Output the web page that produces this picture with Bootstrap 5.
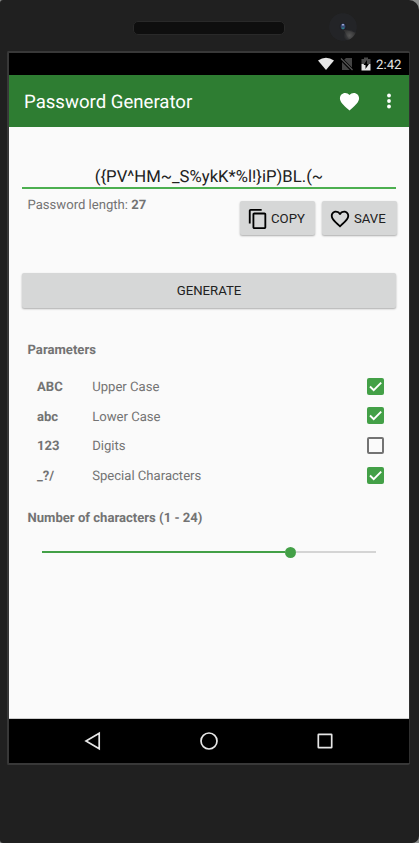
<!DOCTYPE html>
<html lang="en">
<head>
<meta charset="utf-8">
<meta name="viewport" content="width=device-width, initial-scale=1">
<title>Password Generator</title>
<link href="https://cdn.jsdelivr.net/npm/bootstrap@5.3.0/dist/css/bootstrap.min.css" rel="stylesheet">
<style>
body{font-family:Roboto,sans-serif;background:#8b8d8c;color:#737373;font-size:13.1px;line-height:20px;text-rendering:geometricPrecision}
svg{display:block;flex:none}
.phone{width:419px;height:843px;background:#202020;border-radius:3px 10px 7px 3px}
.phone-top{height:51px;padding-left:133px;padding-top:13px}
.speaker{width:152px;height:14px;margin-top:8px;border-radius:5px;background:#0e0e0e;border:1px solid #292929}
.camera{width:28px;height:28px;margin-left:44px}
.screen{width:403px;height:714px;margin-left:7px;border:2px solid #383838;border-right:1px solid #303030;border-radius:2px;background:#fafafa}
.status{height:22px;background:#000;color:#e6e6e6;padding-right:7.5px;font-size:13.2px}
.status span{padding-top:3px}
.appbar{height:52px;background:#2e7d32;color:#fff;padding:0 14px 0 15px}
.title{font-size:18.6px;padding-top:2px}
.main{height:591px;padding:35px 13px 0 13px}
.pw{height:27px;border-bottom:2px solid #4caf50;color:#212121;font-size:16.7px;line-height:31px}
.meta{padding-top:6px;padding-left:5.5px}
.meta-label{padding-top:1px}
.key{color:#212121;background:#d6d7d7;border:0;border-radius:2px;box-shadow:0 1px 2px rgba(0,0,0,.32);font-size:13.2px;line-height:20px;height:34px;padding:1px 0 0}
.key:hover{background:#d6d7d7}
.small-key{width:75px}
.gen{margin-top:38px;height:34.5px}
.params{margin:33px 12px 0 5.5px}
.param{height:29.6px}
.param b,.param span:not(.box){padding-top:3.4px}
.sym{width:55.2px;margin-left:9.5px}
.box{width:17px;height:17px;border-radius:2px;background:#43a047}
.box.off{background:#fafafa;border:2px solid #737373}
.track{height:12px;margin:17.5px 20px 0 20px}
.line-on{width:242.5px;height:2px;background:#43a047}
.line-off{height:2px;background:#d4d4d4}
.thumb{width:11px;height:11px;border-radius:50%;background:#43a047}
.navkeys{height:45px;background:#000;border-top:1px solid #ccc;padding:0 75px 0 75px}
</style>
</head>
<body>
<div class="phone overflow-hidden">
  <div class="phone-top d-flex align-items-start">
    <div class="speaker"></div>
    <svg class="camera" viewBox="0 0 28 28"><defs><radialGradient id="glare"><stop offset="0" stop-color="#777"/><stop offset="1" stop-color="#777" stop-opacity="0"/></radialGradient><clipPath id="lens"><circle cx="14" cy="14" r="14"/></clipPath></defs><g clip-path="url(#lens)"><circle cx="14" cy="14" r="14" fill="#232427"/><path d="M14 16 28 20 21 28z" fill="#333334"/><circle cx="20.500" cy="22.500" r="6" fill="url(#glare)" opacity=".5"/></g><circle cx="14" cy="13.500" r="3.500" fill="#1e1f23"/><ellipse cx="14" cy="13.500" rx="2.300" ry="3" fill="#394a72"/><rect x="13" y="11" width="2" height="1.500" fill="#9aa3d0"/><rect x="13" y="14.500" width="2" height="1.500" fill="#298080"/></svg>
  </div>
  <div class="screen overflow-hidden">
    <div class="status d-flex align-items-center justify-content-end">
      <svg width="18" height="14" viewBox="0 0 18 14"><path d="M1 3.500Q9-2.200 17 3.500L9 13z" fill="#e6e6e6"/></svg>
      <svg width="14" height="14" viewBox="0 0 14 14" style="margin-left:5px"><path d="M6 1h6v9.500L4.200 2.700zM2 5l7.800 8H2z" fill="#444"/><path d="M1 1.500 12.500 13" stroke="#555" stroke-width="1.300"/></svg>
      <svg width="10" height="14" viewBox="0 0 10 14" style="margin-left:7px"><path d="M.5 2h2.500V.5h4V2h2.500v5h-9z" fill="#4a4a4a"/><path d="M.5 7h9v6.500h-9z" fill="#e6e6e6"/><path d="M6 3 2.500 8H4.500v4L8 7H6z" fill="#000"/></svg>
      <span style="margin-left:5.500px">2:42</span>
    </div>
    <header class="appbar d-flex align-items-center">
      <span class="title me-auto">Password Generator</span>
      <svg width="23" height="23" viewBox="0 0 24 24" fill="#fff"><path d="M12 21.350l-1.450-1.320C5.400 15.360 2 12.280 2 8.500 2 5.420 4.420 3 7.500 3c1.740 0 3.410.81 4.500 2.090C13.090 3.810 14.760 3 16.500 3 19.580 3 22 5.420 22 8.500c0 3.780-3.400 6.860-8.550 11.540z"/></svg>
      <svg width="4" height="16" viewBox="0 0 4 16" fill="#fff" style="margin-left:26px;margin-right:4px"><circle cx="2" cy="2.500" r="1.900"/><circle cx="2" cy="8" r="1.900"/><circle cx="2" cy="13.500" r="1.900"/></svg>
    </header>
    <main class="main">
      <div class="pw text-center">({PV^HM~_S%ykK*%l!}iP)BL.(~</div>
      <div class="meta d-flex justify-content-between">
        <div class="meta-label">Password length: <b>27</b></div>
        <div class="d-flex" style="padding-top:6px;gap:7px;margin-right:-.5px">
          <button class="btn key small-key d-flex align-items-center"><svg width="22" height="22" viewBox="0 0 24 24" fill="#000" style="margin-left:7.500px;margin-right:2px"><path d="M16 1H4c-1.100 0-2 .9-2 2v14h2V3h12V1zm3 4H8c-1.100 0-2 .9-2 2v14c0 1.100.9 2 2 2h11c1.100 0 2-.9 2-2V7c0-1.100-.9-2-2-2zm0 16H8V7h11v14z"/></svg>COPY</button>
          <button class="btn key small-key d-flex align-items-center"><svg width="22" height="22" viewBox="0 0 24 24" fill="#000" style="margin-left:7.500px;margin-right:3px"><path d="M16.500 3c-1.740 0-3.410.81-4.500 2.090C10.910 3.810 9.240 3 7.500 3 4.420 3 2 5.420 2 8.500c0 3.780 3.400 6.860 8.550 11.540L12 21.350l1.450-1.320C18.600 15.360 22 12.280 22 8.500 22 5.420 19.580 3 16.500 3zm-4.400 15.550l-.1.1-.1-.1C7.140 14.240 4 11.390 4 8.500 4 6.500 5.500 5 7.500 5c1.540 0 3.040.99 3.570 2.360h1.870C13.460 5.990 14.960 5 16.500 5c2 0 3.500 1.500 3.500 3.500 0 2.890-3.140 5.740-7.900 10.050z"/></svg>SAVE</button>
        </div>
      </div>
      <button class="btn key gen d-block w-100">GENERATE</button>
      <section class="params">
        <div class="fw-bold" style="margin-bottom:11px">Parameters</div>
        <div class="param d-flex align-items-center"><b class="sym">ABC</b><span class="me-auto">Upper Case</span><span class="box"><svg width="17" height="17" viewBox="0 0 17 17"><path d="M3 8.500 6.700 12.200 14.200 4.700" fill="none" stroke="#fff" stroke-width="1.900"/></svg></span></div>
        <div class="param d-flex align-items-center"><b class="sym">abc</b><span class="me-auto">Lower Case</span><span class="box"><svg width="17" height="17" viewBox="0 0 17 17"><path d="M3 8.500 6.700 12.200 14.200 4.700" fill="none" stroke="#fff" stroke-width="1.900"/></svg></span></div>
        <div class="param d-flex align-items-center"><b class="sym">123</b><span class="me-auto">Digits</span><span class="box off"></span></div>
        <div class="param d-flex align-items-center"><b class="sym">_?/</b><span class="me-auto">Special Characters</span><span class="box"><svg width="17" height="17" viewBox="0 0 17 17"><path d="M3 8.500 6.700 12.200 14.200 4.700" fill="none" stroke="#fff" stroke-width="1.900"/></svg></span></div>
        <div class="fw-bold" style="margin-top:19px">Number of characters (1 - 24)</div>
      </section>
      <div class="track d-flex align-items-center"><div class="line-on"></div><div class="thumb"></div><div class="line-off flex-grow-1"></div></div>
    </main>
    <nav class="navkeys d-flex align-items-center justify-content-between">
      <svg width="18" height="20" viewBox="0 0 18 20" fill="none" stroke="#e6e6e6" stroke-width="1.700"><path d="M15.200 2.200v15.600L2 10z"/></svg>
      <svg width="20" height="20" viewBox="0 0 20 20" fill="none" stroke="#e6e6e6" stroke-width="1.700"><circle cx="10" cy="10" r="8"/></svg>
      <svg width="18" height="20" viewBox="0 0 18 20" fill="none" stroke="#e6e6e6" stroke-width="1.700"><rect x="2.300" y="3.300" width="13.400" height="13.400" rx=".5"/></svg>
    </nav>
  </div>
</div>
<script src="https://cdn.jsdelivr.net/npm/bootstrap@5.3.0/dist/js/bootstrap.bundle.min.js"></script>
</body>
</html>
